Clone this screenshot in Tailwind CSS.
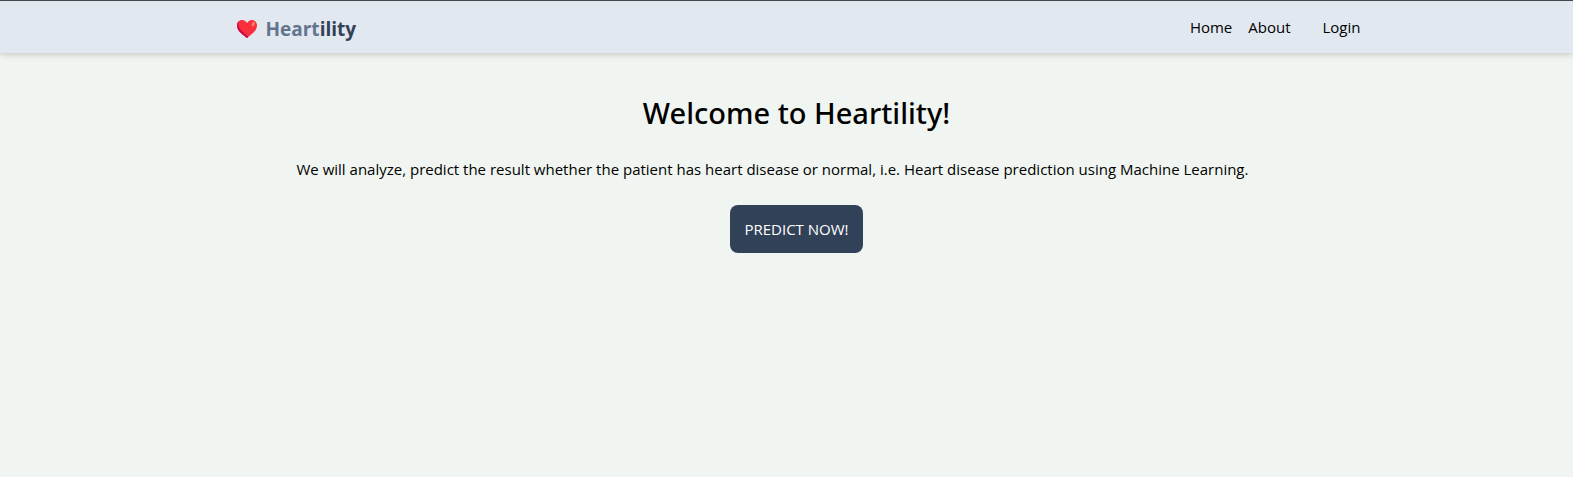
<!DOCTYPE html>
<html lang="en">
<head>
<meta charset="utf-8">
<meta name="viewport" content="width=device-width, initial-scale=1">
<title>Heartility</title>
<script src="https://cdn.jsdelivr.net/npm/@tailwindcss/browser@4"></script>
</head>
<body class="min-h-screen bg-[#f0f5f1] text-black text-[15px] leading-6 font-['Segoe_UI','Open_Sans','Noto_Sans',sans-serif]">
<header class="border-t border-[#46474d] bg-slate-200 pl-5 shadow-[0_2px_6px_rgb(0_0_0/0.16)]">
  <div class="mx-auto flex h-13 max-w-[1128px] items-center justify-between">
    <a href="#" class="flex items-center gap-2 pt-1 pl-[3px] text-[19px] leading-6 font-bold text-slate-700">
      <svg class="h-5 w-[22px]" viewBox="0 0 22 20" aria-hidden="true">
        <path d="M11 19C8 16.500 1 12.500 1 6.500C1 3.500 3 1 6 1C8.500 1 10.200 2.500 11 4.200C11.800 2.500 13.500 1 16 1C19 1 21 3.500 21 6.500C21 12.500 14 16.500 11 19Z" fill="#f92f3c"/>
        <path d="M11 19C8 16.500 1 12.500 1 6.500C1 4.500 1.800 3 3 2C2 4.500 2.300 7 3.800 9.500C6 13 9.500 14.500 12.300 17.900Z" fill="#ca0b4a"/>
        <ellipse cx="17.300" cy="5" rx="1.500" ry="2.500" transform="rotate(25 17.300 5)" fill="#ff7b66"/>
      </svg>
      <span><span class="text-slate-500">Heart</span>ility</span>
    </a>
    <nav class="flex items-center gap-8">
      <div class="flex gap-4">
        <a href="#">Home</a>
        <a href="#">About</a>
      </div>
      <a href="#">Login</a>
    </nav>
  </div>
</header>
<main class="pl-5">
  <div class="mx-auto flex max-w-[1000px] flex-col items-center gap-6 pt-10">
    <h1 class="text-[29px] leading-10 font-medium font-['Segoe_UI','Noto_Sans',sans-serif]">Welcome to Heartility!</h1>
    <p class="w-full">We will analyze, predict the result whether the patient has heart disease or normal, i.e. Heart disease prediction using Machine Learning.</p>
    <button type="button" class="rounded-lg bg-slate-700 px-[14px] py-3 text-white">PREDICT NOW!</button>
  </div>
</main>
</body>
</html>
